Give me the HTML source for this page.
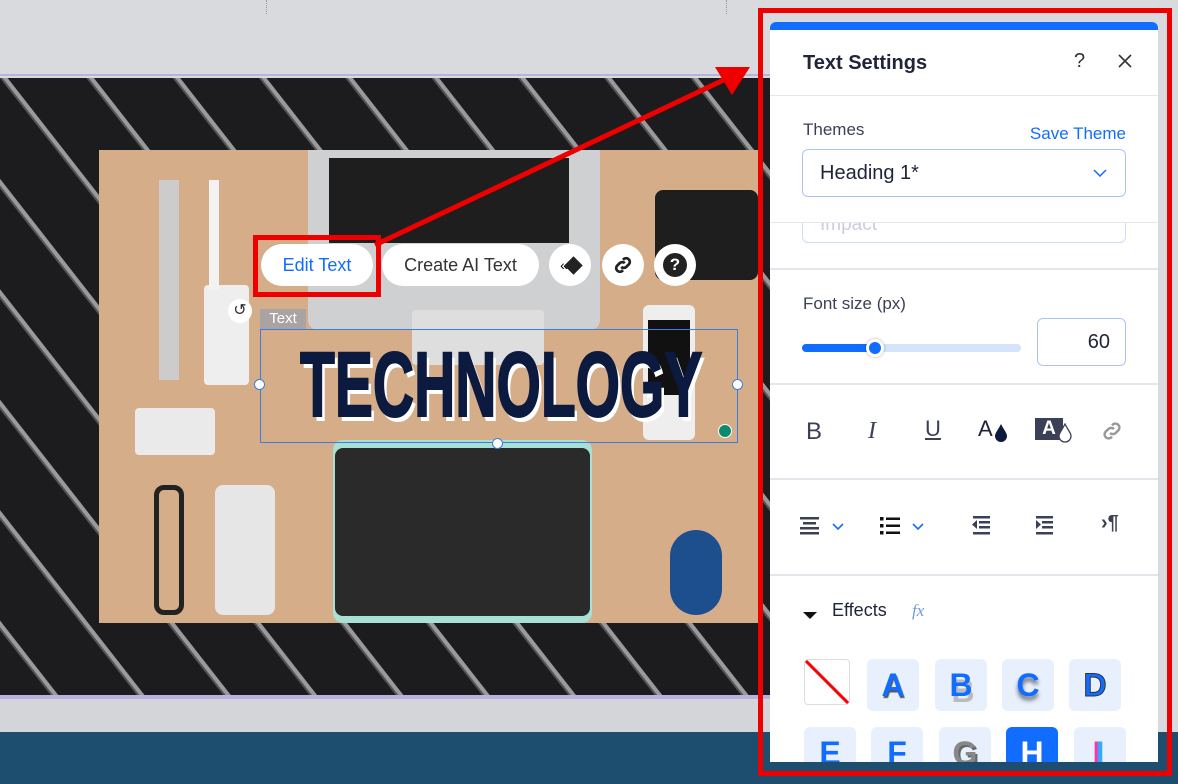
<!DOCTYPE html>
<html><head><meta charset="utf-8"><style>
*{box-sizing:border-box;margin:0;padding:0}
body{width:1178px;height:784px;overflow:hidden;position:relative;background:#d9dadd;font-family:"Liberation Sans",sans-serif}
.abs{position:absolute}
.photo{left:99px;top:150px;width:659px;height:473px;background:#d6ad89;overflow:hidden}
.pill{background:#fff;border-radius:22px;height:42px;top:244px;font-size:18px;display:flex;align-items:center;justify-content:center;color:#333}
.circ{background:#fff;border-radius:50%;width:42px;height:42px;top:244px;display:flex;align-items:center;justify-content:center}
.panel{left:770px;top:22px;width:388px;height:740px;background:#fff;border-top:8px solid #116dff;border-radius:6px 6px 0 0;overflow:hidden}
.sep{left:0;width:388px;height:2px;background:#e3e7ec}
.lbl{font-size:17px;color:#3b4057}
.tile{width:52px;height:52px;border-radius:6px;background:#e8f0fd;color:#116dff;font-weight:bold;font-size:32px;display:flex;align-items:center;justify-content:center}
</style></head><body>
<div class="abs" style="left:0;top:74px;width:770px;height:2px;background:#b9b2e0"></div>
<div class="abs" style="left:266px;top:0;height:14px;border-left:1px dotted #999"></div>
<div class="abs" style="left:726px;top:0;height:14px;border-left:1px dotted #999"></div>
<svg class="abs" style="left:0;top:78px" width="770" height="617"><defs><pattern id="p" width="68" height="40" patternUnits="userSpaceOnUse" patternTransform="rotate(-38)"><rect width="68" height="40" fill="#1c1c1e"/><rect x="0" width="3" height="40" fill="#555"/><rect x="2" width="4" height="40" fill="#9a9a9c"/></pattern></defs><rect width="770" height="617" fill="url(#p)"/></svg>
<div class="abs" style="left:0;top:695px;width:770px;height:4px;background:#b9b2e0"></div>
<div class="abs" style="left:0;top:699px;width:770px;height:33px;background:#d4d5d8"></div>
<div class="abs" style="left:0;top:732px;width:1178px;height:52px;background:#1d4e6f"></div>
<div class="abs photo">
 <div class="abs" style="left:209px;top:0;width:292px;height:180px;background:#cfd0d2;border-radius:0 0 10px 10px"></div>
 <div class="abs" style="left:230px;top:8px;width:240px;height:85px;background:#1e1e1e"></div>
 <div class="abs" style="left:313px;top:160px;width:132px;height:55px;background:#dedede;border-radius:4px"></div>
 <div class="abs" style="left:234px;top:290px;width:259px;height:183px;background:#a8e0d6;border-radius:10px"></div>
 <div class="abs" style="left:236px;top:298px;width:255px;height:168px;background:#2a2a2a;border-radius:8px"></div>
 <div class="abs" style="left:544px;top:155px;width:52px;height:135px;background:#eee;border-radius:6px"></div>
 <div class="abs" style="left:549px;top:170px;width:42px;height:75px;background:#111"></div>
 <div class="abs" style="left:556px;top:40px;width:103px;height:90px;background:#1e1e1e;border-radius:8px"></div>
 <div class="abs" style="left:116px;top:335px;width:60px;height:130px;background:#e6e6e6;border-radius:8px"></div>
 <div class="abs" style="left:36px;top:258px;width:80px;height:47px;background:#eaeaea;border-radius:4px"></div>
 <div class="abs" style="left:105px;top:135px;width:45px;height:100px;background:#eee;border-radius:4px"></div>
 <div class="abs" style="left:110px;top:30px;width:10px;height:110px;background:#f2f2f2"></div>
 <div class="abs" style="left:60px;top:30px;width:20px;height:200px;background:#ccc"></div>
 <div class="abs" style="left:55px;top:335px;width:30px;height:130px;border:5px solid #222;border-radius:10px"></div>
 <div class="abs" style="left:571px;top:380px;width:52px;height:85px;background:#1d4f8f;border-radius:26px"></div>
</div>
<div class="abs" style="left:260px;top:329px;width:478px;height:114px;border:1px solid #3b7de0"></div>
<div class="abs" style="left:260px;top:309px;width:46px;height:20px;background:#aaa3a3;color:#fff;font-size:15px;text-align:center;line-height:20px">Text</div>
<div class="abs" style="left:300px;top:339px;width:405px;height:100px;overflow:visible"><div style="display:inline-block;font-weight:bold;font-size:92px;line-height:1;color:#0b1a3e;-webkit-text-stroke:2px #0b1a3e;transform:scaleX(0.62);transform-origin:left top;white-space:nowrap;text-shadow:5px 5px 0 #fff">TECHNOLOGY</div></div>
<div class="abs" style="left:254px;top:379px;width:11px;height:11px;border-radius:50%;background:#fff;border:1px solid #3b7de0"></div>
<div class="abs" style="left:732px;top:379px;width:11px;height:11px;border-radius:50%;background:#fff;border:1px solid #3b7de0"></div>
<div class="abs" style="left:492px;top:438px;width:11px;height:11px;border-radius:50%;background:#fff;border:1px solid #3b7de0"></div>
<div class="abs" style="left:718px;top:424px;width:14px;height:14px;border-radius:50%;background:#0b8a6e;border:1px solid #fff"></div>
<div class="abs" style="left:228px;top:299px;width:24px;height:24px;border-radius:50%;background:#fff;font-size:16px;text-align:center;line-height:24px;color:#333">↺</div>
<div class="abs pill" style="left:261px;width:112px;color:#116dff">Edit Text</div>
<div class="abs pill" style="left:382px;width:157px">Create AI Text</div>
<div class="abs circ" style="left:549px"><span style="font-size:14px;letter-spacing:-3px">«</span><span style="display:inline-block;width:13px;height:13px;background:#222;transform:rotate(45deg);margin-left:2px"></span></div>
<div class="abs circ" style="left:602px"><svg width="22" height="22" viewBox="0 0 24 24" fill="none" stroke="#222" stroke-width="3"><path d="M10 14a4 4 0 0 0 5.6 0l3-3a4 4 0 0 0-5.6-5.6l-1 1M14 10a4 4 0 0 0-5.6 0l-3 3a4 4 0 0 0 5.6 5.6l1-1"/></svg></div>
<div class="abs circ" style="left:654px"><div style="width:24px;height:24px;border-radius:50%;background:#222;color:#fff;font-weight:bold;font-size:17px;text-align:center;line-height:24px">?</div></div>
<div class="abs" style="left:253px;top:235px;width:128px;height:62px;border:5px solid #e00"></div>
<svg class="abs" style="left:370px;top:55px" width="390" height="200"><line x1="5" y1="190" x2="360" y2="22" stroke="#e00" stroke-width="5"/><polygon points="380,12 345,12 362,40" fill="#e00"/></svg>
<div class="abs" style="left:758px;top:8px;width:414px;height:768px;border:5px solid #e00"></div>
<div class="abs panel">
 <div class="abs" style="left:33px;top:22px;font-size:20px;font-weight:bold;color:#20253a">Text Settings</div>
 <div class="abs" style="left:304px;top:20px;font-size:20px;color:#333">?</div>
 <svg class="abs" style="left:348px;top:24px" width="14" height="14"><path d="M1 1l12 12M13 1L1 13" stroke="#333" stroke-width="1.6"/></svg>
 <div class="abs sep" style="top:65px;height:1px"></div>
 <div class="abs lbl" style="left:33px;top:90px">Themes</div>
 <div class="abs" style="left:248px;top:94px;width:108px;text-align:right;font-size:17px;color:#116dff;white-space:nowrap">Save Theme</div>
 <div class="abs" style="left:32px;top:119px;width:324px;height:48px;border:1px solid #a8c5f5;border-radius:6px;font-size:20px;color:#20253a;padding:12px 17px">Heading 1*<svg style="position:absolute;right:18px;top:19px" width="14" height="8"><path d="M1 1l6 6 6-6" stroke="#116dff" stroke-width="1.5" fill="none"/></svg></div>
 <div class="abs" style="left:0;top:192px;width:388px;height:1px;background:#e3e7ec"></div>
 <div class="abs" style="left:32px;top:193px;width:324px;height:20px;border:1px solid #c9dcf8;border-top:none;border-radius:0 0 6px 6px;color:#ccd;font-size:19px;padding-left:17px;line-height:4px;overflow:hidden">Impact</div>
 <div class="abs sep" style="top:238px"></div>
 <div class="abs lbl" style="left:33px;top:264px">Font size (px)</div>
 <div class="abs" style="left:32px;top:314px;width:219px;height:8px;border-radius:4px;background:#d5e4fb"></div>
 <div class="abs" style="left:32px;top:314px;width:74px;height:8px;border-radius:4px;background:#116dff"></div>
 <div class="abs" style="left:96px;top:309px;width:18px;height:18px;border-radius:50%;background:#116dff;border:3px solid #fff;box-shadow:0 0 3px rgba(0,0,0,.3)"></div>
 <div class="abs" style="left:267px;top:288px;width:89px;height:48px;border:1px solid #a8c5f5;border-radius:6px;font-size:20px;text-align:right;padding:12px 15px;color:#20253a">60</div>
 <div class="abs sep" style="top:353px"></div>
 <div class="abs" style="left:36px;top:388px;font-size:24px;color:#3b4057">B</div>
 <div class="abs" style="left:98px;top:388px;font-size:24px;color:#3b4057;font-family:'Liberation Serif',serif;font-style:italic">I</div>
 <div class="abs" style="left:155px;top:386px;font-size:22px;color:#3b4057;text-decoration:underline">U</div>
 <div class="abs" style="left:208px;top:386px;font-size:22px;color:#20253a">A</div>
 <svg class="abs" style="left:224px;top:393px" width="14" height="20"><path d="M7 1C4 7 1 10 1 13a6 6 0 0 0 12 0c0-3-3-6-6-12z" fill="#0b1a3e"/></svg>
 <div class="abs" style="left:265px;top:388px;width:28px;height:22px;background:#3b4057;color:#fff;font-size:19px;text-align:center;line-height:22px;font-weight:bold">A</div>
 <svg class="abs" style="left:288px;top:393px" width="14" height="20"><path d="M7 1C4 7 1 10 1 13a6 6 0 0 0 12 0c0-3-3-6-6-12z" fill="#fff" stroke="#3b4057" stroke-width="1.3"/></svg>
 <svg class="abs" style="left:330px;top:389px" width="24" height="24" viewBox="0 0 24 24" fill="none" stroke="#999" stroke-width="2.5"><path d="M10 14a4 4 0 0 0 5.6 0l3-3a4 4 0 0 0-5.6-5.6l-1 1M14 10a4 4 0 0 0-5.6 0l-3 3a4 4 0 0 0 5.6 5.6l1-1"/></svg>
 <div class="abs sep" style="top:448px"></div>
 <svg class="abs" style="left:30px;top:486px" width="50" height="20"><g fill="#3b4057"><rect x="0" y="1" width="19" height="2.5"/><rect x="3" y="6" width="13" height="2.5"/><rect x="0" y="11" width="19" height="2.5"/><rect x="0" y="16" width="19" height="2.5"/></g><path d="M33 8l5 5 5-5" stroke="#116dff" stroke-width="1.6" fill="none"/></svg>
 <svg class="abs" style="left:110px;top:486px" width="50" height="20"><g fill="#111"><rect x="0" y="1" width="3.5" height="3.5"/><rect x="6" y="1.5" width="14" height="2.5"/><rect x="0" y="8" width="3.5" height="3.5"/><rect x="6" y="8.5" width="14" height="2.5"/><rect x="0" y="15" width="3.5" height="3.5"/><rect x="6" y="15.5" width="14" height="2.5"/></g><path d="M33 8l5 5 5-5" stroke="#116dff" stroke-width="1.6" fill="none"/></svg>
 <svg class="abs" style="left:201px;top:486px" width="20" height="20"><g fill="#3b4057"><rect x="2" y="0" width="17" height="2.5"/><rect x="8" y="5" width="11" height="2.5"/><rect x="8" y="10" width="11" height="2.5"/><rect x="2" y="16" width="17" height="2.5"/><path d="M6 4l-5 4.5 5 4.5z"/></g></svg>
 <svg class="abs" style="left:265px;top:486px" width="20" height="20"><g fill="#3b4057"><rect x="1" y="0" width="17" height="2.5"/><rect x="7" y="5" width="11" height="2.5"/><rect x="7" y="10" width="11" height="2.5"/><rect x="1" y="16" width="17" height="2.5"/><path d="M1 4l5 4.5-5 4.5z"/></g></svg>
 <div class="abs" style="left:331px;top:482px;font-size:20px;font-weight:bold;color:#3b4057">›¶</div>
 <div class="abs sep" style="top:544px"></div>
 <div class="abs" style="left:33px;top:582px;width:0;height:0;border-left:7px solid transparent;border-right:7px solid transparent;border-top:7px solid #111"></div>
 <div class="abs" style="left:62px;top:570px;font-size:18px;color:#20253a">Effects</div>
 <div class="abs" style="left:142px;top:571px;font-size:17px;color:#6b9be8;font-style:italic;font-family:'Liberation Serif',serif">fx</div>
 <div class="abs" style="left:34px;top:629px;width:46px;height:46px;border:1px solid #ddd;border-radius:4px;background:linear-gradient(to top right,transparent 47%,#f00 48%,#f00 52%,transparent 53%)"></div>
 <div class="abs tile" style="left:97px;top:629px;text-shadow:1px 2px 1px #555">A</div>
 <div class="abs tile" style="left:165px;top:629px;text-shadow:2px 6px 0 #bbb">B</div>
 <div class="abs tile" style="left:232px;top:629px;text-shadow:0 4px 4px #667">C</div>
 <div class="abs tile" style="left:299px;top:629px;-webkit-text-stroke:1px #333">D</div>
 <div class="abs tile" style="left:34px;top:697px">E</div>
 <div class="abs tile" style="left:101px;top:697px">F</div>
 <div class="abs tile" style="left:169px;top:697px;color:#888;text-shadow:2px 2px 0 #666">G</div>
 <div class="abs tile" style="left:236px;top:697px;background:#116dff;color:#fff">H</div>
 <div class="abs tile" style="left:304px;top:697px;color:#33aaff;text-shadow:-3px 0 0 #f3a">I</div>
</div>
</body></html>
